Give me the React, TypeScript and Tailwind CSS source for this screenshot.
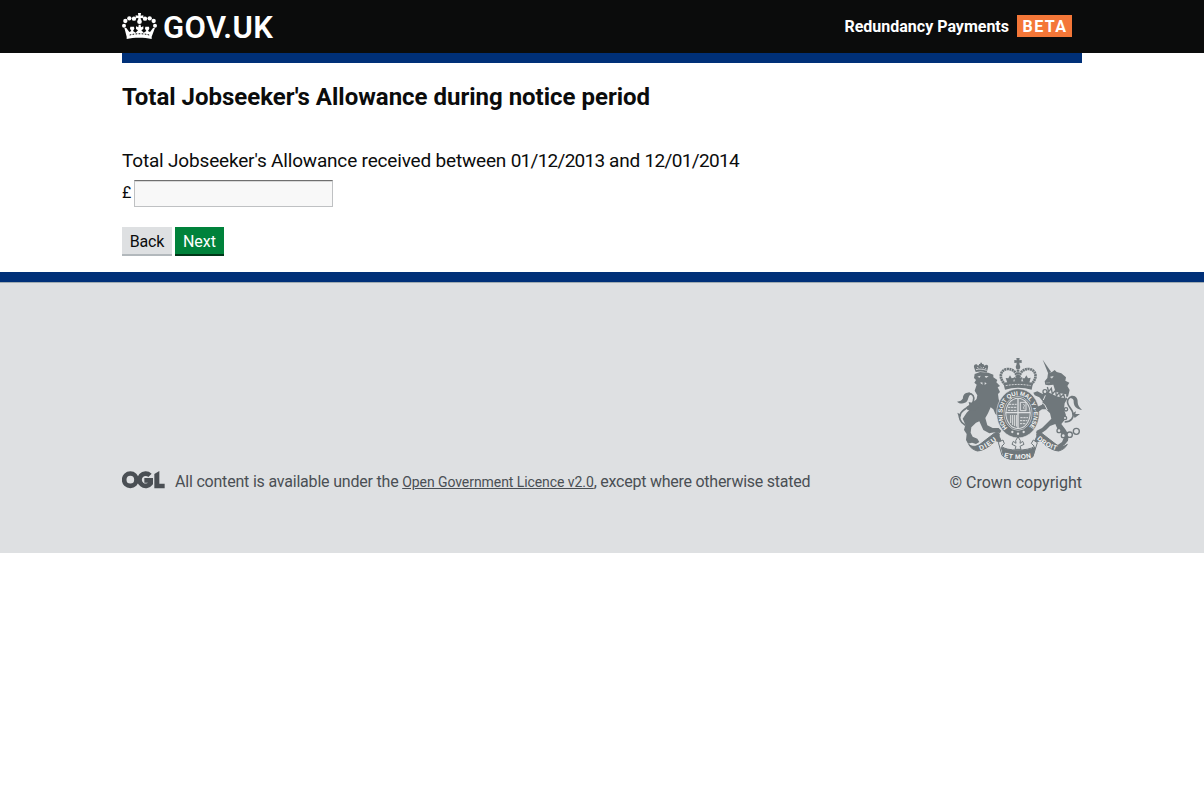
import React from "react";

function Crown() {
  return (
    <svg className="block h-[27px] w-[35px] shrink-0" viewBox="0 0 105 81" fill="#fff" aria-hidden="true">
      <path d="M48 0h9l-1 8 8-1v9l-8-1 1 9h-9l1-9-8 1V7l8 1z" />
      <circle cx="52.500" cy="26" r="7" />
      <circle cx="36" cy="17" r="6.500" />
      <circle cx="69" cy="17" r="6.500" />
      <circle cx="22" cy="16" r="6.500" />
      <circle cx="83" cy="16" r="6.500" />
      <circle cx="10" cy="24" r="6.500" />
      <circle cx="95" cy="24" r="6.500" />
      <circle cx="6" cy="38" r="6" />
      <circle cx="99" cy="38" r="6" />
      <path d="M7 44l6 1 9 12 6-3-4-7 1-6h11l1 6-4 7 8 5 7-7-6-4v-8l7 3 1-8h6l1 8 7-3v8l-6 4 7 7 8-5-4-7 1-6h11l1 6-4 7 6 3 9-12 6-1-10 27v7c-22-5-53-5-75 0v-7z" />
      <path d="M23 66c19-5 41-5 59 0" fill="none" stroke="#0b0c0c" strokeWidth="3" strokeDasharray="5 4" />
    </svg>
  );
}

function OglMark() {
  return (
    <svg className="mt-px block h-[18px] w-[43px] shrink-0" viewBox="0 0 129 54" aria-label="OGL">
      <g fill="none" stroke="#4a4f54" strokeWidth="14">
        <circle cx="25" cy="26" r="18.5" />
        <path d="M84 13a18.500 18.500 0 1 0 2 24V28H67" />
      </g>
      <path d="M97 9l15-9v38h16v14H97z" fill="#4a4f54" />
    </svg>
  );
}

function Crest() {
  return (
    <svg className="block h-[102px] w-[125px]" viewBox="51 24 375 306" fill="#6f777b" aria-hidden="true">
      <g>
        <path d="M107 66l-5-14c-2-10 10-12 12-4 3-6 8-6 10-1 3-5 8-4 10 1 3-6 13-4 10 5l-4 15c-11-4-22-5-33-2z" />
        <path d="M121 38h5v4h4v4h-4v5h-5v-5h-4v-4h4z" />
        <path d="M108 59c10-3 20-2 32 2M112 51l3 4M121 50l3 3M131 51l-2 4M138 54l-2 3" stroke="#dee0e2" strokeWidth="2.500" fill="none" />
        <path d="M104 72L120 66 145 68 160 74 160 82 172 90 169 97 180 108 173 112 180 126 174 132 176 148 182 160 180 172 185 185 180 204 166 192 160 178 152 172 144 190 136 204 142 226 158 234 176 234 184 242 180 249 164 247 148 250 130 240 118 214 108 218 94 232 92 248 98 260 112 266 118 276 108 282 96 278 84 281 78 270 80 252 72 240 76 224 68 206 80 188 96 172 108 156 112 136 104 122 110 104 103 98 108 90 102 84Z" />
        <path d="M112 80l10-3-3 6zM134 78l12 1-8 5zM120 98l7-1 1 7zM134 97l6 3-6 5z" fill="#dee0e2" />
        <path d="M112 146l-16 12-10-2 2 10-8 4 2 10 22 2 18-16z" />
      </g>
      <path d="M76 226c-16-8-21-24-14-36 8-14 32-20 38-36 5-14-2-24-14-24" fill="none" stroke="#6f777b" strokeWidth="5" />
      <path d="M90 128c-14-2-22 8-21 17-3 6-9 10-18 10 8 8 24 7 30-1 6-8 2-16 14-22z" />
      <path d="M58 206l-6-18 12 6z" />

      <g fill="none" stroke="#6f777b">
        <path d="M197 104C176 88 178 60 202 57C220 56 229 68 231 82M272 104C293 88 291 60 267 57C249 56 240 68 238 82" strokeWidth="8" strokeDasharray="6 1.500" />
        <path d="M234 52v40" strokeWidth="8" strokeDasharray="6 1.500" />
      </g>
      <path d="M229 24h10l-1 7 7-1v9l-7-1 1 9h-10l1-9-7 1v-9l7 1z" />
      <circle cx="234" cy="51" r="7" />
      <path d="M190 99c28-7 61-7 89 0l-4 20c-26-8-54-8-80 0z" />
      <path d="M197 107c26-5 50-5 75 0" stroke="#dee0e2" strokeWidth="2.500" fill="none" strokeDasharray="6 3" />
      <path d="M210 76l5 9 8-2-4 15h-17l-5-14 8 1zM259 76l5 9 8-2-4 15h-17l-5-14 8 1zM234 72l6 11 7-2-4 16h-18l-4-16 7 2z" />

      <ellipse cx="234" cy="190" rx="64" ry="74" stroke="#dee0e2" strokeWidth="2" />
      <ellipse cx="234" cy="190" rx="42" ry="51" fill="none" stroke="#dee0e2" strokeWidth="2" />
      <path id="garter" d="M203 234A47 56 0 1 1 265 234" fill="none" />
      <text fill="#f4f5f5" fontFamily="Liberation Sans, sans-serif" fontSize="18" fontWeight="700">
        <textPath href="#garter" textLength="250" lengthAdjust="spacing">HONI SOIT QUI MAL Y PENSE</textPath>
      </text>
      <ellipse cx="234" cy="190" rx="38" ry="47" fill="#dee0e2" />
      <ellipse cx="234" cy="190" rx="35" ry="44" fill="#848b8f" />
      <path d="M234 145v90M197 188h74" stroke="#dee0e2" strokeWidth="4" />
      <g fill="none" stroke="#dee0e2" strokeWidth="3">
        <path d="M207 163h23M204 172h26M204 181h26M241 203h23M240 212h22M240 221h18" strokeDasharray="7 2" />
        <path d="M241 157h17v25h-17zM250 163c10 3-5 8 4 15M212 195v24M218 195v30M224 195v33M230 195v35" />
      </g>
      <circle cx="217" cy="246" r="3.500" fill="#dee0e2" />
      <circle cx="234" cy="251" r="3.500" fill="#dee0e2" />
      <circle cx="251" cy="246" r="3.500" fill="#dee0e2" />

      <path d="M308 29l25 36-8 6z" />
      <path d="M324 70L336 66 344 60 350 66 364 70 378 82 376 92 388 98 382 108 389 120 384 140 366 138 346 124 340 104 326 106 316 104 314 94 322 84Z" />
      <path d="M331 81l9-2-4 6zM318 99l12-1" fill="#dee0e2" stroke="#dee0e2" strokeWidth="1" />
      <path d="M320 122L345 124 372 134 382 146 374 160 372 178 378 196 372 212 364 222 376 238 386 254 384 272 374 284 362 292 352 286 366 276 372 262 352 236 346 222 330 228 318 240 304 250 288 250 290 242 306 234 322 218 334 206 330 190 318 178 306 178 294 186 284 180 292 170 306 164 308 154 298 142 284 136 280 128 292 124 308 132Z" />
      <path d="M322 117c18 14 32 19 56 22" fill="none" stroke="#dee0e2" strokeWidth="12" />
      <path d="M322 111l4 14 8-10 3 17 10-11 2 17 10-11 2 15 10-9 3 11" fill="none" stroke="#6f777b" strokeWidth="4" />
      <path d="M296 152l18 12 8 16M316 136l-6 14" fill="none" stroke="#dee0e2" strokeWidth="3" />
      <path d="M374 216c20-1 29-14 24-29-5-15-22-24-14-39 5-8 12-8 18-6" fill="none" stroke="#6f777b" strokeWidth="5" />
      <path d="M392 138c14-4 22 6 21 19 0 9 5 15 13 23-12-2-22-8-24-18-2-9 2-14-10-18zM398 190l10-6-2 8 14 0-16 12z" />
      <g fill="#dee0e2" stroke="#6f777b" strokeWidth="4">
        <circle cx="315" cy="125" r="6" />
        <circle cx="378" cy="178" r="5" />
        <circle cx="375" cy="204" r="5" />
        <circle cx="357" cy="242" r="6" />
        <circle cx="370" cy="257" r="6" />
        <circle cx="389" cy="254" r="8" />
        <circle cx="409" cy="244" r="9" />
      </g>

      <g stroke="#6f777b" strokeWidth="3">
        <path d="M86 283c10 8 22 8 34 0l44-34c10-4 17 2 13 9l9 20-19-6c-16 15-33 29-55 31-13-4-21-10-26-20z" />
        <path d="M382 283c-10 8-22 8-34 0l-44-34c-10-4-17 2-13 9l-9 20 19-6c16 15 33 29 55 31 13-4 21-10 26-20z" />
        <path d="M175 277l14-7 4 11-8 8c12 15 83 15 98 0l-9-9 6-10 12 8-12 38c-18 17-77 17-94 0z" fill="#dee0e2" />
        <path d="M184 292c21 14 79 14 101 0l-6 28c-19 13-69 13-88 0z" />
        <path d="M216 283l4-9 8 6-1-8 7-12 7 12-1 8 8-6 4 9-12 6 3 9h-18l3-9z" fill="#dee0e2" />
      </g>
      <g fill="#f4f5f5" fontFamily="Liberation Sans, sans-serif" fontSize="20" fontWeight="700">
        <path id="dieu" d="M121 301Q147 292 176 265" fill="none" />
        <text><textPath href="#dieu" textLength="58">DIEU</textPath></text>
        <path id="droit" d="M290 267Q315 293 354 302" fill="none" />
        <text><textPath href="#droit" textLength="68">DROIT</textPath></text>
        <path id="etmon" d="M191 321Q234 333 279 321" fill="none" />
        <text><textPath href="#etmon" textLength="84">ET MON</textPath></text>
      </g>
    </svg>
  );
}

export default function App() {
  return (
    <div className="min-h-[811px] bg-white font-['Roboto',sans-serif] text-[#0b0c0c]">
      <header className="h-[53px] bg-[#0b0c0c] text-white">
        <div className="mx-auto flex h-full w-[960px] justify-between pr-[10px]">
          <a className="flex pt-[13px]">
            <Crown />
            <span className="ml-[6px] -mt-[3px] text-[31px] leading-[36px] font-semibold tracking-[0.4px] whitespace-nowrap">GOV.UK</span>
          </a>
          <div className="flex pt-[15px]">
            <span className="text-[16px] leading-[23px] font-bold whitespace-nowrap">Redundancy Payments</span>
            <strong className="ml-2 flex h-[22px] w-[55px] justify-center bg-[#f47738] pl-px text-[16px] leading-[23px] font-bold tracking-[1.4px]">BETA</strong>
          </div>
        </div>
      </header>
      <main className="mx-auto h-[219px] w-[960px] border-t-[10px] border-[#003078]">
        <h1 className="pt-[18px] text-[24px] leading-[32px] font-bold tracking-[-0.01px] whitespace-nowrap">Total Jobseeker's Allowance during notice period</h1>
        <form className="pt-[35px]" onSubmit={(e) => e.preventDefault()}>
          <label htmlFor="amount" className="block text-[19px] leading-[25px] tracking-[-0.18px] whitespace-nowrap">
            Total Jobseeker's Allowance received between <span className="tracking-[-0.73px]">01/12/2013</span> and <span className="tracking-[-0.66px]">12/01/2014</span>
          </label>
          <div className="mt-[7px] flex">
            <span className="w-[12px] text-[16px] leading-[26px]">£</span>
            <input id="amount" className="h-[27px] w-[199px] border border-[#bfc1c3] border-t-[#6f6f6f] bg-[#f8f8f8] px-1 shadow-[inset_0_1px_0_#d8d8d8] outline-none" />
          </div>
          <div className="mt-[20px] flex gap-[3px] text-[16px] leading-[30px]">
            <button type="button" className="flex h-[29px] w-[50px] justify-center bg-[#dee0e2] tracking-[-0.2px] shadow-[inset_0_-2px_0_#b2b8bc]">Back</button>
            <button type="submit" className="flex h-[29px] w-[49px] justify-center bg-[#00823b] text-white shadow-[inset_0_-2px_0_#003618]">Next</button>
          </div>
        </form>
      </main>
      <footer className="h-[281px] border-t-[10px] border-[#003078] bg-[#dee0e2] text-[#4a4f54]">
        <div className="h-full border-t border-[#a1acb2]">
          <div className="mx-auto flex w-[960px] justify-between">
            <div className="flex pt-[187px]">
              <OglMark />
              <p className="ml-[10px] text-[16px] leading-[24px] whitespace-nowrap">
                <span className="tracking-[-0.2px]">All content is available under the </span><a className="text-[14px] tracking-[-0.07px] underline">Open Government Licence v2.0</a><span className="tracking-[-0.25px]">, except where otherwise stated</span>
              </p>
            </div>
            <div className="flex flex-col items-end pt-[75px]">
              <Crest />
              <span className="mt-[11px] text-[16px] leading-[24px] whitespace-nowrap">© Crown copyright</span>
            </div>
          </div>
        </div>
      </footer>
    </div>
  );
}
